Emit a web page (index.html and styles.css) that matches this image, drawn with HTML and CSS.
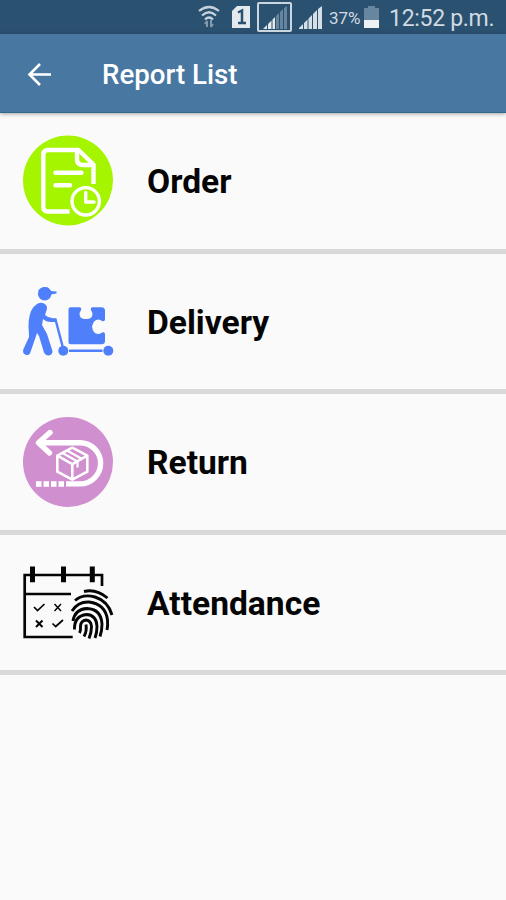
FILE: index.html
```html
<!DOCTYPE html>
<html lang="en">
<head>
    <meta charset="UTF-8">
    <meta name="viewport" content="width=device-width, initial-scale=1.0">
    <title>Report List</title>
    <link rel="stylesheet" href="styles.css">
</head>
<body>
    <!-- Status bar -->
    <div class="status-bar">
        <svg class="wifi" width="22" height="24" viewBox="0 0 22 24" fill="none" stroke="#c5d2dc" stroke-width="2.200">
            <path d="M1 6Q11-2 21 6M4 10.500Q11 4 18 10.500M7 14.500Q11 10.500 15 14.500"/>
            <path d="M9 16v6M7 19l2-3M13 15v7M15 19l-2 3" stroke="#8199ab" stroke-width="2"/>
        </svg>
        <svg class="sim" width="18" height="22" viewBox="0 0 18 22">
            <path d="M5 0h13v22H0V5z" fill="#e3e9ed"/>
            <path d="M6 6.500L10 4.500V17M6 17h8" fill="none" stroke="#2b5170" stroke-width="2.500"/>
        </svg>
        <svg class="signal-box" width="35" height="30" viewBox="0 0 35 30">
            <rect x="1" y="1" width="33" height="28" rx="1" fill="none" stroke="#cbd6df" stroke-width="2"/>
            <path d="M6 27l4-4v4zM11 27v-5l3.500-3.500V27zM15.500 27v-9.500L18 15v12z" fill="#e3e9ed"/>
            <path d="M19 27V14l3-3v16zM23 27V10l3-3v20zM27 27V6l3-2v23z" fill="#67859c"/>
        </svg>
        <svg class="signal" width="23" height="23" viewBox="0 0 23 23" fill="#d5dfe6">
            <path d="M0 23v-1l4-4v5zM5 23v-6l3.500-3.500V23zM9.500 23V12.500L13 9v14zM14 23V8l4-4v19zM19 23V3l4-3v23z"/>
        </svg>
        <span class="percent">37%</span>
        <svg class="battery" width="15" height="22" viewBox="0 0 15 22">
            <path d="M4 0h7v2h4v12H0V2h4z" fill="#6786a0"/>
            <path d="M0 14h15v8H0z" fill="#eef1f3"/>
        </svg>
        <span class="time">12:52 p.m.</span>
    </div>

    <header class="toolbar">
        <svg class="back" width="24" height="24" viewBox="0 0 24 24" fill="none" stroke="#fff" stroke-width="2.600">
            <path d="M24 11.500H3M13 1L2.500 11.500 13 22"/>
        </svg>
        <h1>Report List</h1>
    </header>

    <!-- Report types -->
    <ul class="report-list">
        <li>
            <svg class="icon" viewBox="0 0 90 90" fill="none" stroke="#fff" stroke-width="4.400" stroke-linecap="round" stroke-linejoin="round">
                <circle cx="45" cy="44.500" r="45" fill="#a6f500" stroke="none"/>
                <path d="M46.500 75.500H25q-4.700 0-4.700-4.700V18.500q0-4.500 4.700-4.500h30.500l15 14.500v19.500" stroke-linecap="butt"/>
                <path d="M54 14v9q0 6 6 6h10"/>
                <path d="M32.500 36.700h26M32.500 49.300h14.500"/>
                <circle cx="62.700" cy="65.300" r="13.700" stroke-width="3.400"/>
                <path d="M62.700 56.500v9.500H71" stroke-width="3.400"/>
            </svg>
            <span>Order</span>
        </li>
        <li>
            <svg class="icon" viewBox="0 -1 90 90" fill="#4f7ffb">
                <circle cx="21.700" cy="16.700" r="6.800"/>
                <path d="M15 14Q18 9 25 10.500l3 3.500 5.500.5v2l-6 1z"/>
                <path d="M14 27q5-3 9 1 2 2 0 7l-1 3q3 3 8 3.300h3.500v3.700H28q-5 0-8-3l-1 6 5 9 5.500 17q0 4-4 4.500-3 0-4.500-3L16 59l-2-3-2 6L7 76.500Q5 79 2 77.500q-3-2-1.500-5.500L6 60q0-5-.5-10 0-14 5-20z"/>
                <path d="M32.500 42.500L39.500 69" fill="none" stroke="#4f7ffb" stroke-width="2.400"/>
                <circle cx="40.300" cy="73.700" r="5"/>
                <circle cx="85.300" cy="73.700" r="5"/>
                <path d="M46 72.500h33.500v2.500H46z"/>
                <path d="M47.500 30.300H56q3 0 2 3-1.500 2-1.500 3.500 0 4.700 5 5.200h3q5-.5 5-5.200 0-1.500-1.500-3.500-1-3 2-3h8.500q3.500 0 3.500 3.500V42q0 3-3 2-2-1.500-3.500-1.500-5 0-6.500 7 1 7.500 6 7.500 2 0 4-1.500 3-1 3 2v6.500q0 3.200-3.500 3.200H47.500q-2 0-2-2V32.300q0-2 2-2z"/>
            </svg>
            <span>Delivery</span>
        </li>
        <li>
            <svg class="icon" viewBox="0 0 90 90" fill="none" stroke="#fff">
                <circle cx="45" cy="45" r="45" fill="#d08fce" stroke="none"/>
                <path d="M16 25.700h41a20.600 20.600 0 0 1 0 41.200H43" stroke-width="5.400"/>
                <path d="M27 15.500L15.500 25.700 26.500 36" stroke-width="5.400" stroke-linecap="round" stroke-linejoin="round"/>
                <path d="M13 67h5.500M20.500 67H26M28 67h5.500M35.500 67H41" stroke-width="5.500"/>
                <path d="M49.300 30.700l15 8v16l-15 8-15-8v-16zM34.300 38.700l15 8.500 15-8.500M49.300 47.200v15.500" stroke-width="2.600" stroke-linejoin="round"/>
                <path d="M39.500 36l15 8.500v6M44 33.500l15 8.500" stroke-width="2.200"/>
            </svg>
            <span>Return</span>
        </li>
        <li>
            <svg class="icon" viewBox="0 0 90 90" fill="none" stroke="#050505">
                <path d="M79 28V17H1.700v62h48M2 36h46" stroke-width="2.700"/>
                <path d="M9.500 8.500v15.700M40.500 8.500v15.700M69.300 8.500v15.700" stroke-width="5"/>
                <path d="M11 49l3.500 3.500 7-6.500M29.500 65.500l3.200 3 7.300-6.500" stroke-width="1.700"/>
                <path d="M31.500 46l6.500 7M38 46l-6.500 7" stroke-width="1.500"/>
                <path d="M13 62.500l6.500 6.500M19.500 62.500L13 69" stroke-width="2"/>
                <g stroke-width="2.900">
                    <path d="M61 33.500q12-3 23.500 6.500"/>
                    <path d="M52 42.500q8-7 20-3.500 13 4 17 18"/>
                    <path d="M49 53q6-9.500 17-9 16.500 2 18.500 18 .5 6-.5 10"/>
                    <path d="M50 63q2-12 14-12.500 14 .5 15 15.500 0 7-2 12.500"/>
                    <path d="M51.500 71.500q-.5-13.500 12-15 10 .5 10.500 12 0 6-2 11.500"/>
                    <path d="M56.500 75q1.500-3 1-7 .5-5.500 5.500-6 5 .5 5.500 6.500 0 6-2.500 12"/>
                    <path d="M63 66.500q1 7-2 12"/>
                </g>
            </svg>
            <span>Attendance</span>
        </li>
    </ul>
</body>
</html>
```
FILE: styles.css
```css
* {
    box-sizing: border-box;
}

body {
    font-family: Roboto, "Liberation Sans", sans-serif;
    margin: 0;
    min-height: 900px;
    background-color: #fafafa;
    color: #050505;
}

.status-bar {
    display: flex;
    align-items: center;
    height: 34px;
    padding-left: 198px;
    background-color: #2b5170;
    color: #d0dae2;
    white-space: nowrap;
}

.sim {
    margin-left: 12px;
}

.signal-box {
    margin-left: 7px;
}

.signal {
    margin-left: 7px;
}

.percent {
    margin-left: 7px;
    font-size: 17px;
    width: 35px;
    padding-top: 2px;
}

.time {
    margin-left: 10px;
    font-size: 23px;
    letter-spacing: -0.3px;
    padding-top: 3px;
}

.toolbar {
    display: flex;
    align-items: center;
    height: 79px;
    padding-left: 27px;
    padding-top: 3px;
    background-color: #4878a2;
    border-bottom: 1px solid #2f678f;
    box-shadow: 0 1px 4px rgba(0, 0, 0, 0.35);
    color: white;
}

.toolbar h1 {
    margin: 0 0 0 51px;
    font-size: 27.7px;
    font-weight: 500;
}

.report-list {
    list-style: none;
    margin: 0;
    padding: 0;
}

.report-list li {
    display: flex;
    align-items: center;
    height: 140.6px;
    padding-left: 23px;
    border-bottom: 5px solid #d9d9d9;
    font-size: 33.6px;
    font-weight: 700;
}

.report-list span {
    padding-top: 2px;
}

.icon {
    width: 90px;
    height: 90px;
    margin-right: 34px;
    overflow: visible;
}
```
